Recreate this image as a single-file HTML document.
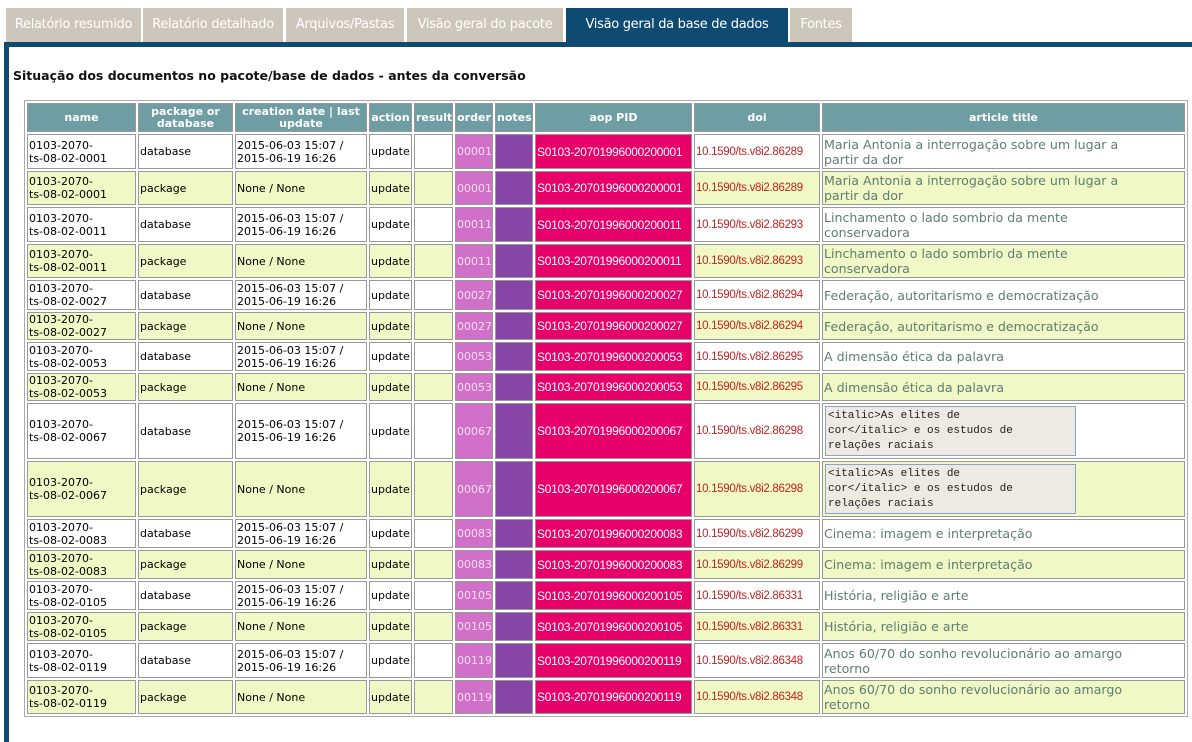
<!DOCTYPE html>
<html><head><meta charset="utf-8"><style>
*{margin:0;padding:0;box-sizing:border-box}
body{width:1192px;height:683px;overflow:hidden;background:#fff;font-family:"DejaVu Sans",Verdana,sans-serif;position:relative}
.tab{position:absolute;top:8px;height:34px;background:#cdc7bb;color:#fff;font:13px "DejaVu Sans",sans-serif;line-height:34px;text-align:center;white-space:nowrap;letter-spacing:-0.3px}
.tab.act{background:#0e4a72;color:#fff}
#panel{position:absolute;left:4px;top:42px;width:1200px;height:700px;border-left:5px solid #0e4a72;border-top:5px solid #0e4a72}
h3{position:absolute;left:13px;top:68px;font:bold 12.5px "DejaVu Sans",sans-serif;color:#111;white-space:nowrap}
table{position:absolute;left:24px;top:100px;width:1164px;border:1px solid #aaa;border-spacing:2px;table-layout:fixed}
td,th{border:1px solid #999;padding:0 1px;font-size:11px;overflow:hidden;line-height:13px;vertical-align:middle;white-space:nowrap}
th{background:#6e9ea4;color:#fff;font-weight:bold;font-size:11px;text-align:center;height:29px;line-height:12px}
tr.y td{background:#f0f8c6}
td.o{background:#d070c8!important;color:#fde;font-size:11px}
td.n{background:#8745a6!important}
td.a{background:#e8006a!important;color:#fff;font:12px "Liberation Sans",sans-serif;letter-spacing:-0.3px;white-space:nowrap}
td.d{color:#c42222;font:11.5px "Liberation Sans",sans-serif;letter-spacing:-0.3px;white-space:nowrap}
td.t{color:#5f7d72;font:12.6px "DejaVu Sans",sans-serif;line-height:15px}
.ta{width:251px;height:50px;background:#ede9e3;border:1px solid #8aa4c8;font:11px "Liberation Mono",monospace;line-height:15px;padding:2px 2px;color:#222;white-space:pre;margin-left:1px}
</style></head><body>
<div class="tab" style="left:6px;width:135px">Relatório resumido</div>
<div class="tab" style="left:143px;width:140px">Relatório detalhado</div>
<div class="tab" style="left:286px;width:118px">Arquivos/Pastas</div>
<div class="tab" style="left:407px;width:156px">Visão geral do pacote</div>
<div class="tab act" style="left:566px;width:222px">Visão geral da base de dados</div>
<div class="tab" style="left:790px;width:62px">Fontes</div>
<div id="panel"></div>
<h3>Situação dos documentos no pacote/base de dados - antes da conversão</h3>
<table>
<colgroup><col style="width:109px"><col style="width:95px"><col style="width:132px"><col style="width:43px"><col style="width:39px"><col style="width:38px"><col style="width:38px"><col style="width:157px"><col style="width:126px"><col></colgroup>
<tr><th>name</th><th>package or<br>database</th><th>creation date | last<br>update</th><th>action</th><th>result</th><th>order</th><th>notes</th><th>aop PID</th><th>doi</th><th>article title</th></tr>

<tr style="height:35px"><td>0103-2070-<br>ts-08-02-0001</td><td>database</td><td>2015-06-03 15:07 /<br>2015-06-19 16:26</td><td>update</td><td></td><td class="o">00001</td><td class="n"></td><td class="a">S0103-20701996000200001</td><td class="d">10.1590/ts.v8i2.86289</td><td class="t">Maria Antonia a interrogação sobre um lugar a<br>partir da dor</td></tr>
<tr class="y" style="height:34px"><td>0103-2070-<br>ts-08-02-0001</td><td>package</td><td>None / None</td><td>update</td><td></td><td class="o">00001</td><td class="n"></td><td class="a">S0103-20701996000200001</td><td class="d">10.1590/ts.v8i2.86289</td><td class="t">Maria Antonia a interrogação sobre um lugar a<br>partir da dor</td></tr>
<tr style="height:35px"><td>0103-2070-<br>ts-08-02-0011</td><td>database</td><td>2015-06-03 15:07 /<br>2015-06-19 16:26</td><td>update</td><td></td><td class="o">00011</td><td class="n"></td><td class="a">S0103-20701996000200011</td><td class="d">10.1590/ts.v8i2.86293</td><td class="t">Linchamento o lado sombrio da mente<br>conservadora</td></tr>
<tr class="y" style="height:34px"><td>0103-2070-<br>ts-08-02-0011</td><td>package</td><td>None / None</td><td>update</td><td></td><td class="o">00011</td><td class="n"></td><td class="a">S0103-20701996000200011</td><td class="d">10.1590/ts.v8i2.86293</td><td class="t">Linchamento o lado sombrio da mente<br>conservadora</td></tr>
<tr style="height:30px"><td>0103-2070-<br>ts-08-02-0027</td><td>database</td><td>2015-06-03 15:07 /<br>2015-06-19 16:26</td><td>update</td><td></td><td class="o">00027</td><td class="n"></td><td class="a">S0103-20701996000200027</td><td class="d">10.1590/ts.v8i2.86294</td><td class="t">Federação, autoritarismo e democratização</td></tr>
<tr class="y" style="height:28px"><td>0103-2070-<br>ts-08-02-0027</td><td>package</td><td>None / None</td><td>update</td><td></td><td class="o">00027</td><td class="n"></td><td class="a">S0103-20701996000200027</td><td class="d">10.1590/ts.v8i2.86294</td><td class="t">Federação, autoritarismo e democratização</td></tr>
<tr style="height:29px"><td>0103-2070-<br>ts-08-02-0053</td><td>database</td><td>2015-06-03 15:07 /<br>2015-06-19 16:26</td><td>update</td><td></td><td class="o">00053</td><td class="n"></td><td class="a">S0103-20701996000200053</td><td class="d">10.1590/ts.v8i2.86295</td><td class="t">A dimensão ética da palavra</td></tr>
<tr class="y" style="height:28px"><td>0103-2070-<br>ts-08-02-0053</td><td>package</td><td>None / None</td><td>update</td><td></td><td class="o">00053</td><td class="n"></td><td class="a">S0103-20701996000200053</td><td class="d">10.1590/ts.v8i2.86295</td><td class="t">A dimensão ética da palavra</td></tr>
<tr style="height:56px"><td>0103-2070-<br>ts-08-02-0067</td><td>database</td><td>2015-06-03 15:07 /<br>2015-06-19 16:26</td><td>update</td><td></td><td class="o">00067</td><td class="n"></td><td class="a">S0103-20701996000200067</td><td class="d">10.1590/ts.v8i2.86298</td><td class="t"><div class="ta">&lt;italic&gt;As elites de
cor&lt;/italic&gt; e os estudos de
relações raciais</div></td></tr>
<tr class="y" style="height:56px"><td>0103-2070-<br>ts-08-02-0067</td><td>package</td><td>None / None</td><td>update</td><td></td><td class="o">00067</td><td class="n"></td><td class="a">S0103-20701996000200067</td><td class="d">10.1590/ts.v8i2.86298</td><td class="t"><div class="ta">&lt;italic&gt;As elites de
cor&lt;/italic&gt; e os estudos de
relações raciais</div></td></tr>
<tr style="height:29px"><td>0103-2070-<br>ts-08-02-0083</td><td>database</td><td>2015-06-03 15:07 /<br>2015-06-19 16:26</td><td>update</td><td></td><td class="o">00083</td><td class="n"></td><td class="a">S0103-20701996000200083</td><td class="d">10.1590/ts.v8i2.86299</td><td class="t">Cinema: imagem e interpretação</td></tr>
<tr class="y" style="height:29px"><td>0103-2070-<br>ts-08-02-0083</td><td>package</td><td>None / None</td><td>update</td><td></td><td class="o">00083</td><td class="n"></td><td class="a">S0103-20701996000200083</td><td class="d">10.1590/ts.v8i2.86299</td><td class="t">Cinema: imagem e interpretação</td></tr>
<tr style="height:29px"><td>0103-2070-<br>ts-08-02-0105</td><td>database</td><td>2015-06-03 15:07 /<br>2015-06-19 16:26</td><td>update</td><td></td><td class="o">00105</td><td class="n"></td><td class="a">S0103-20701996000200105</td><td class="d">10.1590/ts.v8i2.86331</td><td class="t">História, religião e arte</td></tr>
<tr class="y" style="height:29px"><td>0103-2070-<br>ts-08-02-0105</td><td>package</td><td>None / None</td><td>update</td><td></td><td class="o">00105</td><td class="n"></td><td class="a">S0103-20701996000200105</td><td class="d">10.1590/ts.v8i2.86331</td><td class="t">História, religião e arte</td></tr>
<tr style="height:35px"><td>0103-2070-<br>ts-08-02-0119</td><td>database</td><td>2015-06-03 15:07 /<br>2015-06-19 16:26</td><td>update</td><td></td><td class="o">00119</td><td class="n"></td><td class="a">S0103-20701996000200119</td><td class="d">10.1590/ts.v8i2.86348</td><td class="t">Anos 60/70 do sonho revolucionário ao amargo<br>retorno</td></tr>
<tr class="y" style="height:34px"><td>0103-2070-<br>ts-08-02-0119</td><td>package</td><td>None / None</td><td>update</td><td></td><td class="o">00119</td><td class="n"></td><td class="a">S0103-20701996000200119</td><td class="d">10.1590/ts.v8i2.86348</td><td class="t">Anos 60/70 do sonho revolucionário ao amargo<br>retorno</td></tr>
</table>
</body></html>
